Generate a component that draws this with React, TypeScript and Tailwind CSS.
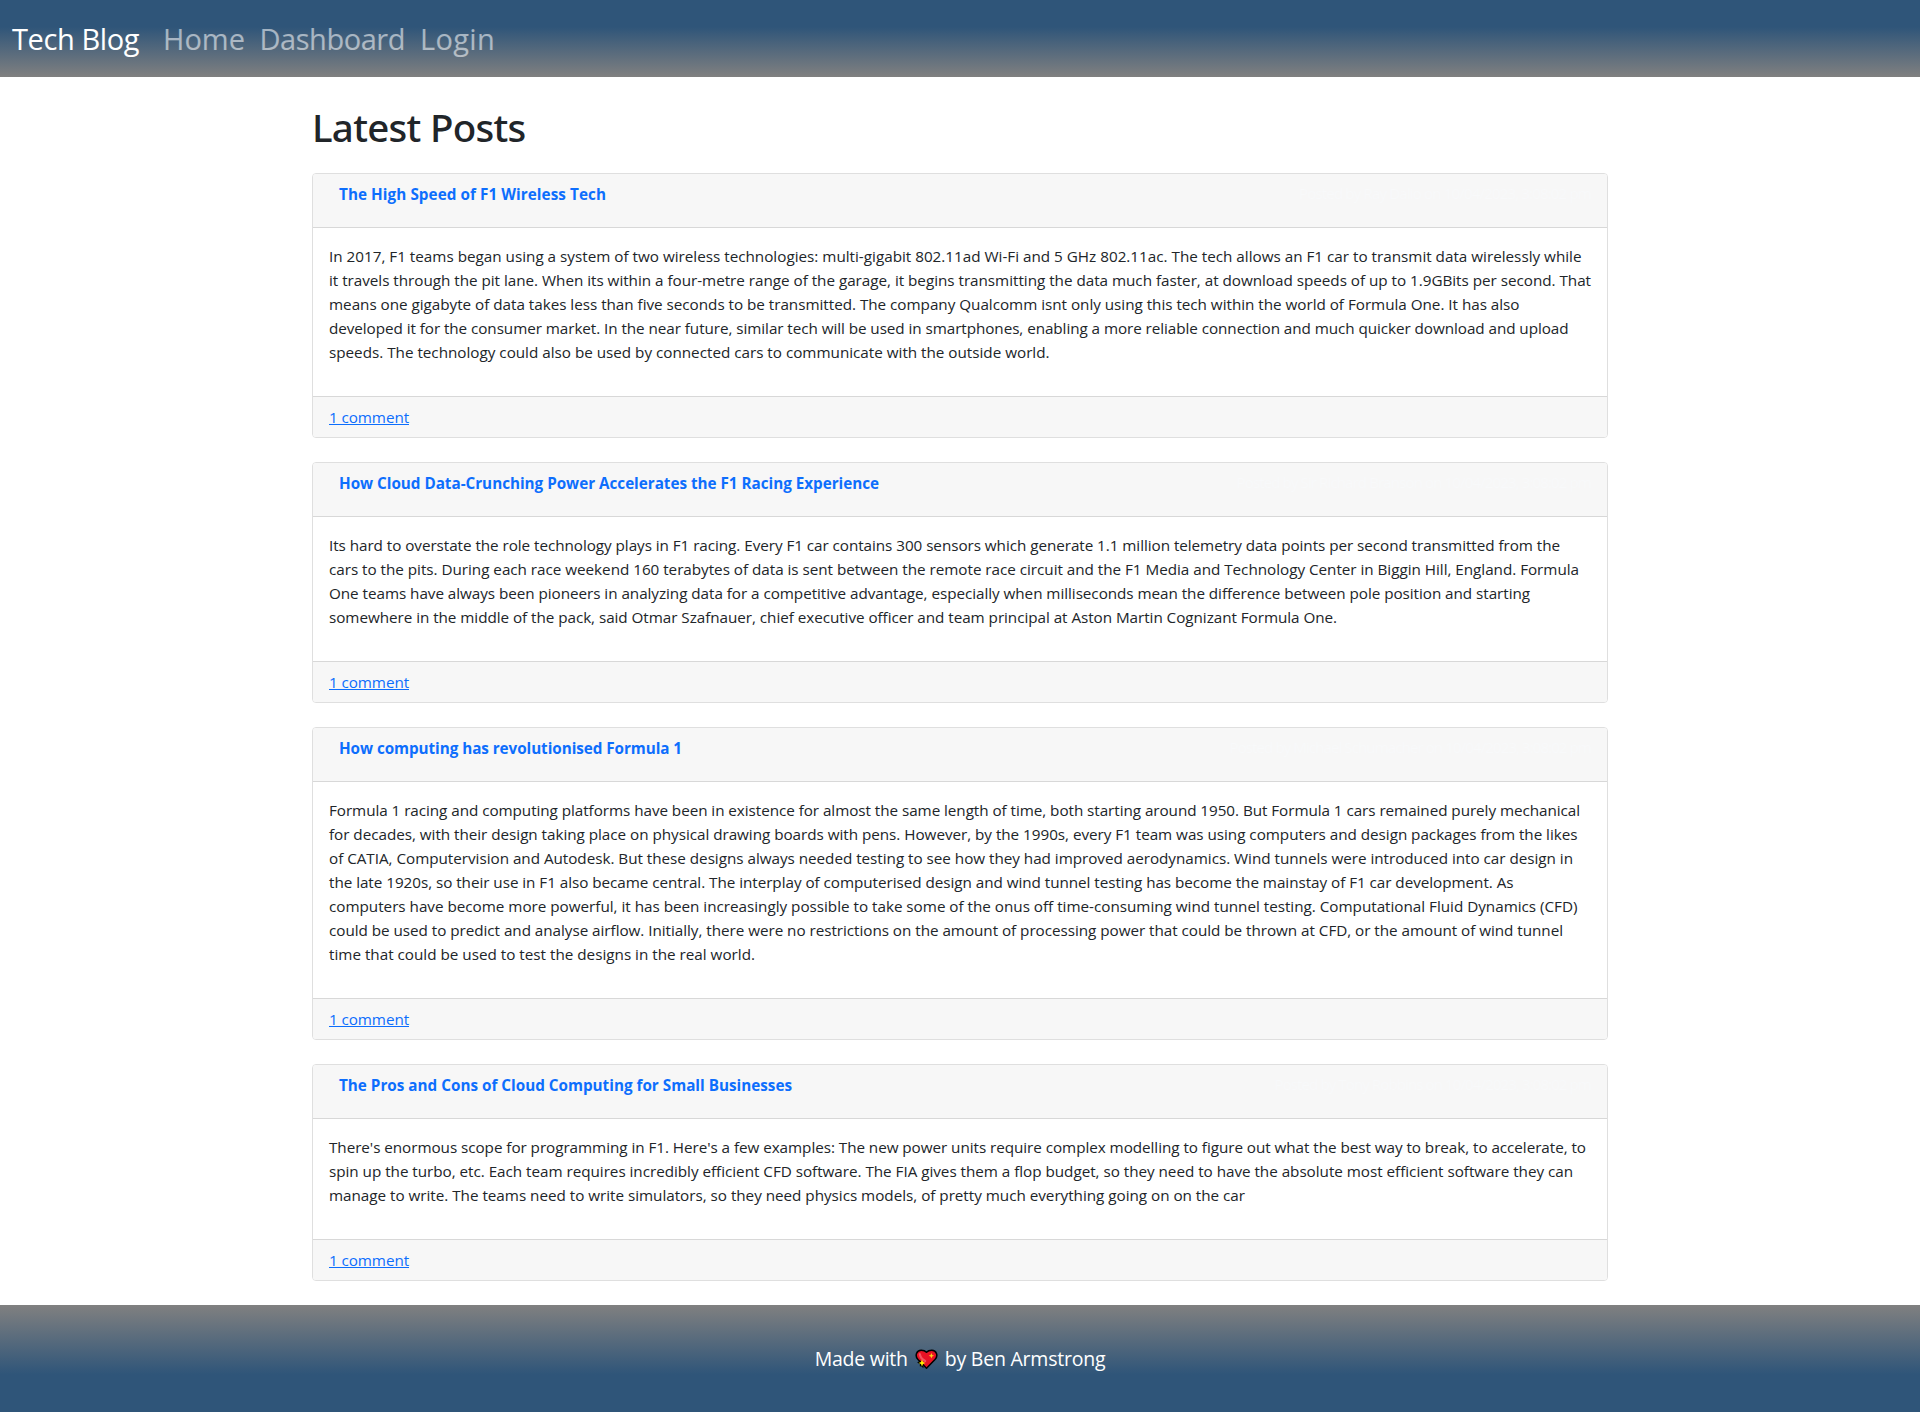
import { useLayoutEffect, useRef, useState } from "react";

type FitProps = { text: string; width: number; className?: string };

/* A single line of text whose tracking is computed so that it fills `width`. */
function Fit({ text, width, className = "" }: FitProps) {
  const ref = useRef<HTMLSpanElement>(null);
  const [tracking, setTracking] = useState(0);

  useLayoutEffect(() => {
    const el = ref.current;
    if (!el) return;
    el.style.letterSpacing = "0px";
    const next = (width - el.getBoundingClientRect().width) / text.length;
    el.style.letterSpacing = `${next}px`;
    setTracking(next);
  }, [text, width]);

  return (
    <span
      ref={ref}
      className={`inline-block whitespace-nowrap ${className}`}
      style={{ letterSpacing: `${tracking}px` }}
    >
      {text}
    </span>
  );
}

type Line = [text: string, width: number];
type Post = { title: Line; posted: Line; lines: Line[] };

const posts: Post[] = [
  {
    title: ["The High Speed of F1 Wireless Tech", 267],
    posted: ["Posted by Ray Dalio on 10/04/2023, 3:08:02 pm", 292],
    lines: [
      ["In 2017, F1 teams began using a system of two wireless technologies: multi-gigabit 802.11ad Wi-Fi and 5 GHz 802.11ac. The tech allows an F1 car to transmit data wirelessly while", 1252.5],
      ["it travels through the pit lane. When its within a four-metre range of the garage, it begins transmitting the data much faster, at download speeds of up to 1.9GBits per second. That", 1262],
      ["means one gigabyte of data takes less than five seconds to be transmitted. The company Qualcomm isnt only using this tech within the world of Formula One. It has also", 1190.5],
      ["developed it for the consumer market. In the near future, similar tech will be used in smartphones, enabling a more reliable connection and much quicker download and upload", 1239.5],
      ["speeds. The technology could also be used by connected cars to communicate with the outside world.", 720.5],
    ],
  },
  {
    title: ["How Cloud Data-Crunching Power Accelerates the F1 Racing Experience", 540],
    posted: ["Posted by Sir Richard Branson on 10/04/2023, 3:08:02 pm", 354.5],
    lines: [
      ["Its hard to overstate the role technology plays in F1 racing. Every F1 car contains 300 sensors which generate 1.1 million telemetry data points per second transmitted from the", 1231],
      ["cars to the pits. During each race weekend 160 terabytes of data is sent between the remote race circuit and the F1 Media and Technology Center in Biggin Hill, England. Formula", 1250],
      ["One teams have always been pioneers in analyzing data for a competitive advantage, especially when milliseconds mean the difference between pole position and starting", 1201],
      ["somewhere in the middle of the pack, said Otmar Szafnauer, chief executive officer and team principal at Aston Martin Cognizant Formula One.", 1008],
    ],
  },
  {
    title: ["How computing has revolutionised Formula 1", 343],
    posted: ["Posted by Michael Schumacher on 10/04/2023, 3:08:02 pm", 361.5],
    lines: [
      ["Formula 1 racing and computing platforms have been in existence for almost the same length of time, both starting around 1950. But Formula 1 cars remained purely mechanical", 1251],
      ["for decades, with their design taking place on physical drawing boards with pens. However, by the 1990s, every F1 team was using computers and design packages from the likes", 1248.5],
      ["of CATIA, Computervision and Autodesk. But these designs always needed testing to see how they had improved aerodynamics. Wind tunnels were introduced into car design in", 1244],
      ["the late 1920s, so their use in F1 also became central. The interplay of computerised design and wind tunnel testing has become the mainstay of F1 car development. As", 1184.5],
      ["computers have become more powerful, it has been increasingly possible to take some of the onus off time-consuming wind tunnel testing. Computational Fluid Dynamics (CFD)", 1248.5],
      ["could be used to predict and analyse airflow. Initially, there were no restrictions on the amount of processing power that could be thrown at CFD, or the amount of wind tunnel", 1234],
      ["time that could be used to test the designs in the real world.", 426],
    ],
  },
  {
    title: ["The Pros and Cons of Cloud Computing for Small Businesses", 453],
    posted: ["Posted by Tony Robbins on 10/04/2023, 3:08:02 pm", 316.5],
    lines: [
      ["There's enormous scope for programming in F1. Here's a few examples: The new power units require complex modelling to figure out what the best way to break, to accelerate, to", 1257],
      ["spin up the turbo, etc. Each team requires incredibly efficient CFD software. The FIA gives them a flop budget, so they need to have the absolute most efficient software they can", 1244],
      ["manage to write. The teams need to write simulators, so they need physics models, of pretty much everything going on on the car", 916],
    ],
  },
];

function PostCard({ post }: { post: Post }) {
  return (
    <article className="mb-6 rounded border border-[#dfdfdf] bg-white">
      <header className="flex h-[54px] items-start justify-between rounded-t-[3px] border-b border-[#d8d8d8] bg-[#f7f7f7] py-2 pr-4 pl-[26px]">
        <a href="#" className="font-bold text-[#0d6efd]">
          <Fit text={post.title[0]} width={post.title[1]} />
        </a>
        <span className="-mt-px text-[#f8f9fa]">
          <Fit text={post.posted[0]} width={post.posted[1]} />
        </span>
      </header>
      <div className="p-4 pb-8">
        <p>
          {post.lines.map(([text, width]) => (
            <span key={text} className="block h-6">
              <Fit text={text} width={width} />
            </span>
          ))}
        </p>
      </div>
      <footer className="flex h-[41px] items-start rounded-b-[3px] border-t border-[#d8d8d8] bg-[#f7f7f7] px-4 py-2">
        <a href="#" className="text-[#0d6efd]">
          <Fit text="1 comment" width={80} className="underline decoration-1 underline-offset-1" />
        </a>
      </footer>
    </article>
  );
}

function SparklingHeart() {
  return (
    <svg viewBox="0 0 23 21" className="h-[21px] w-[23px]" aria-hidden="true">
      <path
        d="M11.5 19.3 L3 10.6 C-0.6 6.6 1.6 1.2 6.2 1.2 C8.6 1.2 10.4 2 11.5 3.2 C12.6 2 14.4 1.2 16.8 1.2 C21.4 1.2 23.6 6.6 20 10.6 Z"
        fill="#e81224"
        stroke="#000"
        strokeWidth="1.5"
        strokeLinejoin="round"
      />
      <path d="M4.8 5.2 C5.3 8.2 7.6 10.6 10.2 12" fill="none" stroke="#f4525f" strokeWidth="2.2" strokeLinecap="round" />
      <path
        d="M5.2 11.6 L2.2 13.6 L4.9 15.2 L4.8 17.2 L6.6 17.4 L8.4 19.2 L8.4 16 Z"
        fill="#000"
      />
      <path d="M7 10.6 L8 13.1 L10.4 14.1 L8 15.1 L7 17.6 L6 15.1 L3.6 14.1 L6 13.1 Z" fill="#fff100" />
      <path d="M16.4 4 L17.2 5.9 L19.1 6.7 L17.2 7.5 L16.4 9.4 L15.6 7.5 L13.7 6.7 L15.6 5.9 Z" fill="#fcd116" />
    </svg>
  );
}

export default function App() {
  return (
    <div className="flex h-[1412px] w-[1920px] flex-col overflow-hidden bg-white font-['Open_Sans','Noto_Sans',sans-serif] text-[15.25px] leading-6 text-[#212529]">
      <nav className="flex h-[77px] shrink-0 items-start bg-[linear-gradient(to_top,#808080,#2f5579_65%)] pt-[17px] pl-3 text-[29px] leading-[44px] text-white/55">
        <a href="#" className="w-[151px] text-white">
          <Fit text="Tech Blog" width={127} />
        </a>
        <a href="#" className="w-[96.5px]">
          <Fit text="Home" width={82} />
        </a>
        <a href="#" className="w-[160.5px]">
          <Fit text="Dashboard" width={145.5} />
        </a>
        <a href="#">
          <Fit text="Login" width={75} />
        </a>
      </nav>

      <main className="mx-auto w-[1296px] shrink-0">
        <h1 className="mb-[22px] pt-[26px] font-['Noto_Sans',sans-serif] text-[38.5px] leading-[48px] font-medium">
          <Fit text="Latest Posts" width={213.5} />
        </h1>
        {posts.map((post) => (
          <PostCard key={post.title[0]} post={post} />
        ))}
      </main>

      <footer className="flex flex-1 items-start justify-center bg-[linear-gradient(to_bottom,#808080,#2f5579_65%)] pt-[39px] text-[19.5px] leading-[30px] text-white">
        <Fit text="Made with" width={93} />
        <span className="mr-[7px] ml-[7px] pt-[5px]">
          <SparklingHeart />
        </span>
        <Fit text="by Ben Armstrong" width={160.5} />
      </footer>
    </div>
  );
}
